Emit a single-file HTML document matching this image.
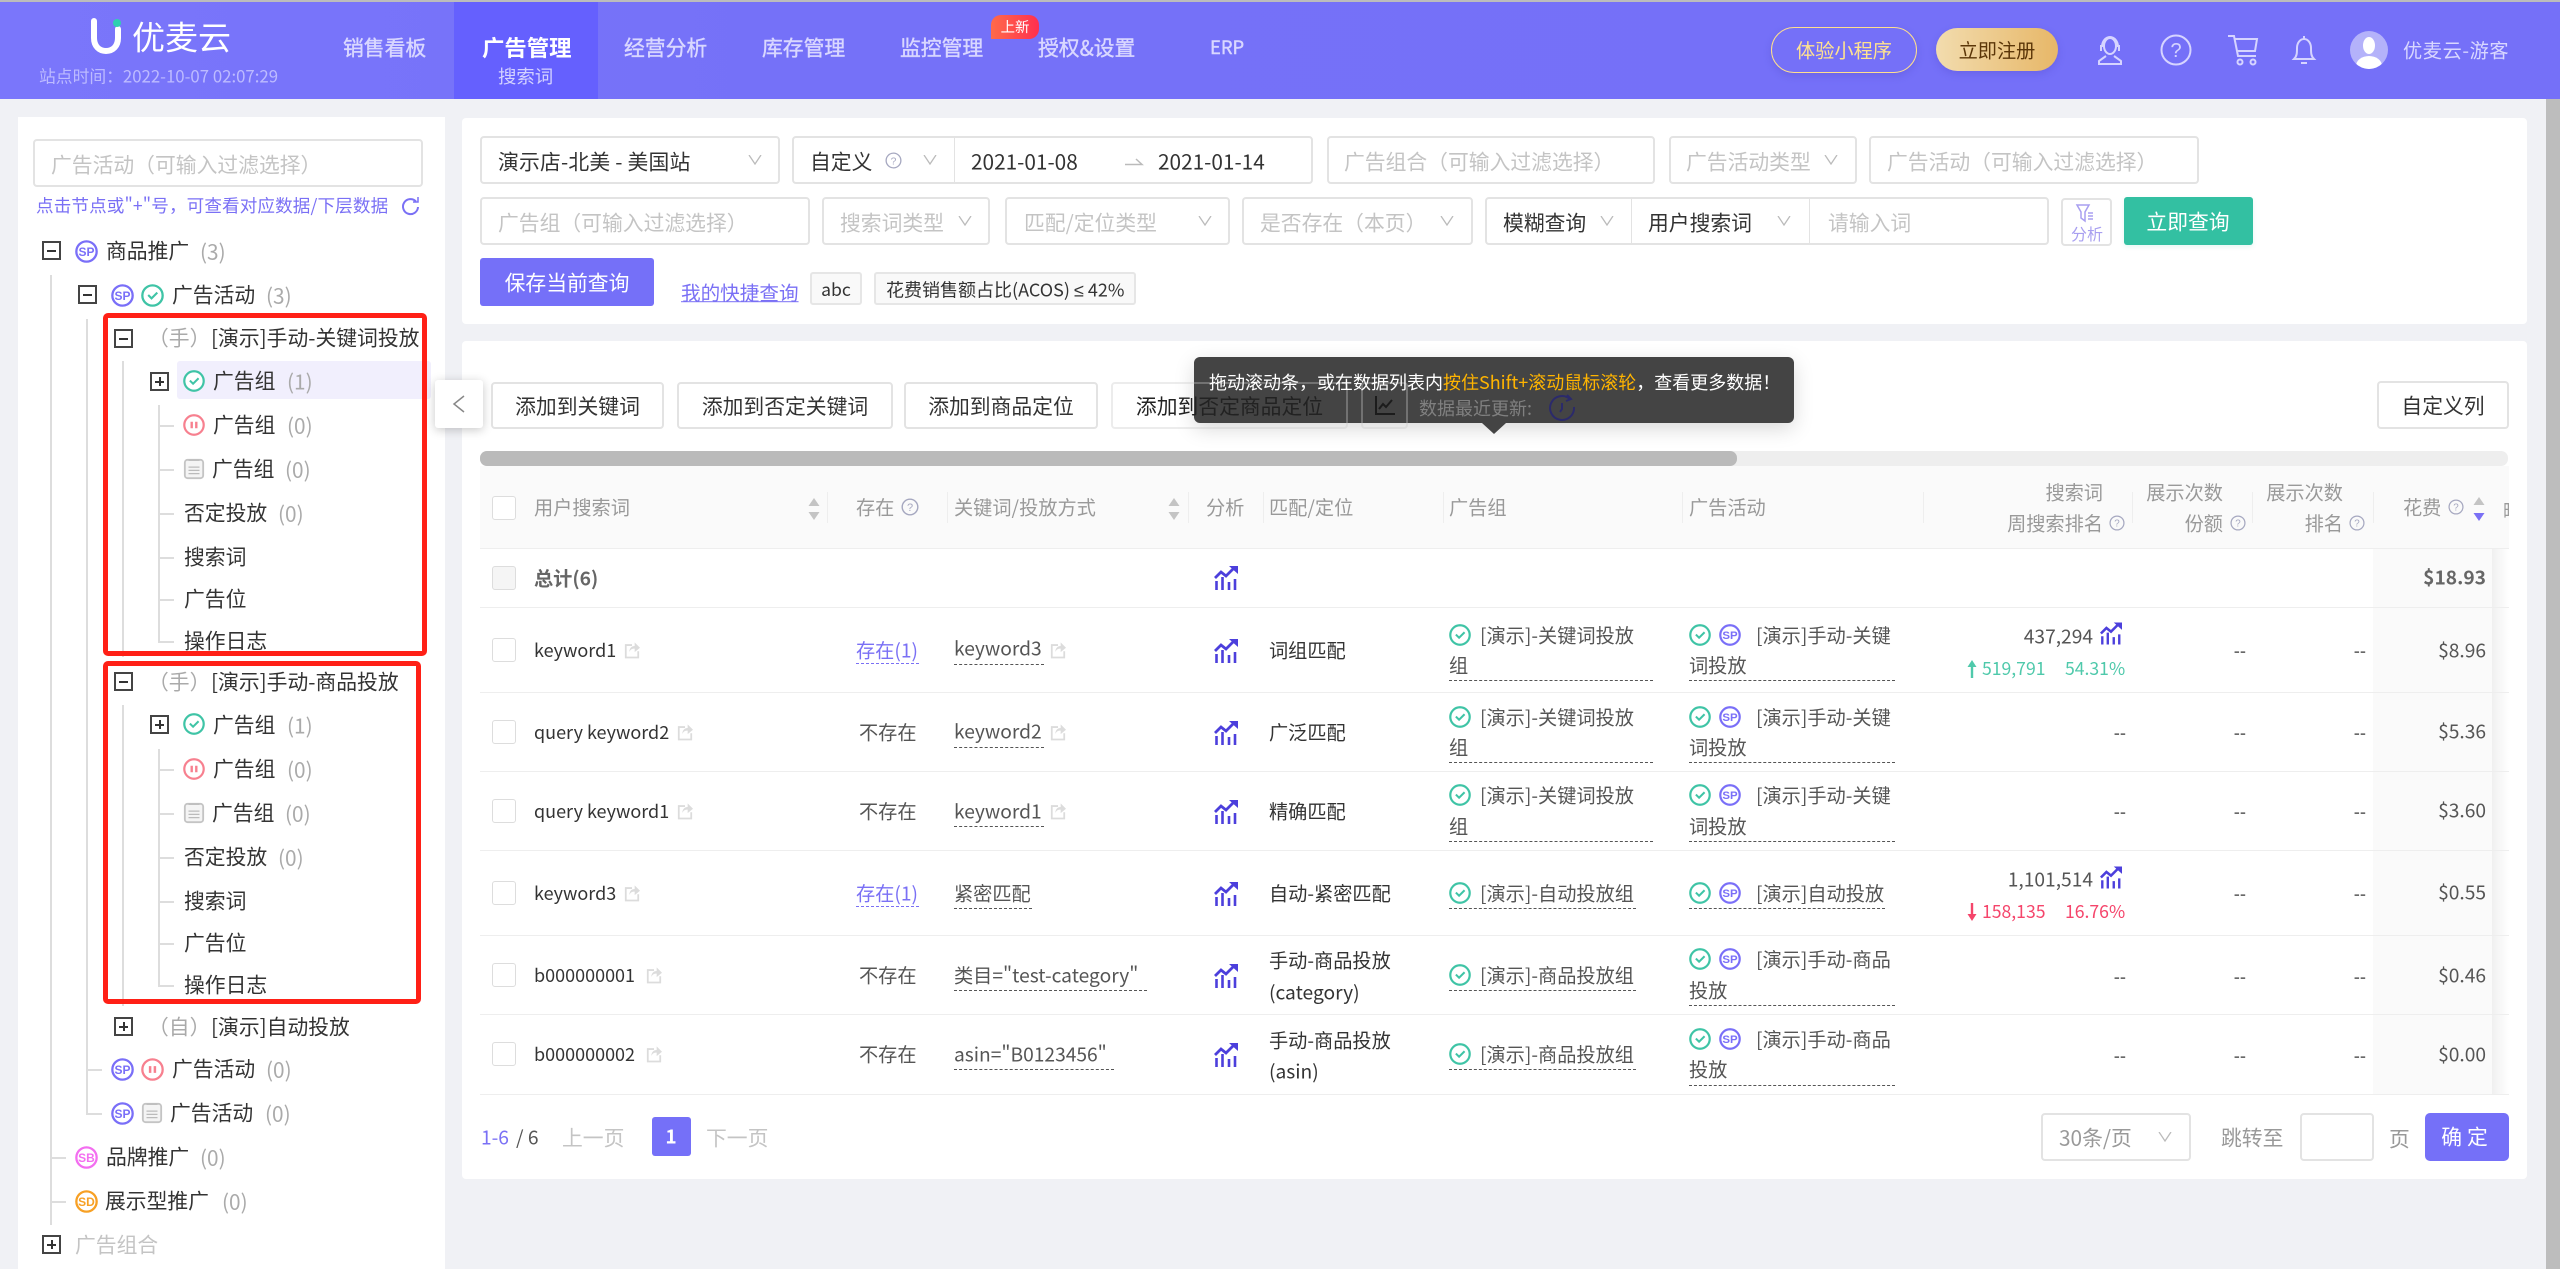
<!DOCTYPE html>
<html lang="zh-CN"><head><meta charset="utf-8"><title>优麦云</title>
<style>
html,body{margin:0;padding:0;width:2560px;height:1269px;overflow:hidden;background:#f0f1f5}
body{position:relative;font-family:"Noto Sans CJK SC","Liberation Sans",sans-serif;color:#333;font-size:19.2px}
.t{position:absolute;line-height:1;white-space:nowrap;transform:translateY(-50%)}
.r{transform:translate(-100%,-50%)}
.c{transform:translate(-50%,-50%)}
.a{position:absolute}
.b{position:absolute;box-sizing:border-box;background:#fff;border:2px solid #e3e3e3;border-radius:4px}
svg.i{position:absolute;overflow:visible}
.f{font-size:20.8px}
.s{font-size:17.6px}
.k{font-size:18px}
.g{color:#c4c4c4}
.n{color:#aaa}
.p{color:#7a70f5}
.h{color:#999}
.w{color:#555}
.nav{color:#d9d7ff;font-size:20.8px;-webkit-text-stroke:.4px #d9d7ff}
.l{position:absolute;background:#ddd;width:2px}
.m{position:absolute;background:#ddd;height:2px}
.d{position:absolute;border-bottom:1px dashed #555;height:0}
.dv{position:absolute;background:#eee;width:1px;top:492px;height:31px}
.rw{position:absolute;left:480px;width:2029px;height:1px;background:#eee}
.cb{position:absolute;left:492px;width:24px;height:24px;box-sizing:border-box;background:#fff;border:1px solid #ddd;border-radius:3px}
.bx{position:absolute;box-sizing:border-box;width:19px;height:19px;border:2px solid #444;background:#fff}
.bx:before{content:"";position:absolute;left:3px;top:6.5px;width:9px;height:2px;background:#333}
.pl:after{content:"";position:absolute;left:6.5px;top:3px;width:2px;height:9px;background:#333}
.red{position:absolute;box-sizing:border-box;border:5px solid #ff2016;border-radius:5px;left:103px}
.btn{position:absolute;box-sizing:border-box;background:transparent;border:2px solid #e3e3e3;border-radius:4px;top:382px;height:47px;font-size:20.8px;line-height:43px;text-align:center;color:#333;white-space:nowrap}
</style></head><body>
<svg width="0" height="0" style="position:absolute">
<symbol id="sp" viewBox="0 0 24 24"><circle cx="12" cy="12" r="10.6" fill="#fff" stroke="#7a6ff8" stroke-width="2.4"/><text x="12" y="16.500" font-size="12.500" font-weight="700" text-anchor="middle" fill="#7a6ff8" font-family="Liberation Sans,sans-serif">SP</text></symbol>
<symbol id="sb" viewBox="0 0 24 24"><circle cx="12" cy="12" r="10.6" fill="#fff" stroke="#f36ef0" stroke-width="2.4"/><text x="12" y="16.500" font-size="12.500" font-weight="700" text-anchor="middle" fill="#f36ef0" font-family="Liberation Sans,sans-serif">SB</text></symbol>
<symbol id="sd" viewBox="0 0 24 24"><circle cx="12" cy="12" r="10.6" fill="#fff" stroke="#f7a024" stroke-width="2.4"/><text x="12" y="16.500" font-size="12.500" font-weight="700" text-anchor="middle" fill="#f7a024" font-family="Liberation Sans,sans-serif">SD</text></symbol>
<symbol id="ok" viewBox="0 0 24 24"><circle cx="12" cy="12" r="10.6" fill="#fff" stroke="#3fc4a6" stroke-width="2.4"/><path d="M7.5 11.5l3.5 3.5 6-6" fill="none" stroke="#3fc4a6" stroke-width="2.2"/></symbol>
<symbol id="pa" viewBox="0 0 24 24"><circle cx="12" cy="12" r="10.6" fill="#fff" stroke="#f7808f" stroke-width="2.4"/><path d="M9.5 8.5v7M14.5 8.5v7" fill="none" stroke="#f7808f" stroke-width="2.6"/></symbol>
<symbol id="cl" viewBox="0 0 24 24"><rect x="2" y="2" width="20" height="20" rx="3" fill="#f4f4f4" stroke="#c4c4c4" stroke-width="2"/><path d="M6 2.5h12M6 10h12M6 13.500h12M6 17h12" fill="none" stroke="#bbb" stroke-width="1.400"/></symbol>
<symbol id="tr" viewBox="0 0 24 24"><path d="M1 12l6-6 5 4 7-7" fill="none" stroke="#4c3fdc" stroke-width="2.800"/><path d="M15 0h9v8z" fill="#4c3fdc"/><path d="M2.500 15v9M8.500 11v13M15 16v8M21 13v11" fill="none" stroke="#4c3fdc" stroke-width="2.600"/></symbol>
<symbol id="sh" viewBox="0 0 18 20"><path d="M9 5H2v14h14v-7" fill="none" stroke="#dcdcdc" stroke-width="2"/><path d="M6 13c0-5 3-7 6-7V2l6 6-6 5V9c-3 0-5 1-6 4z" fill="#dcdcdc"/></symbol>
<symbol id="he" viewBox="0 0 18 18"><circle cx="9" cy="9" r="7.800" fill="none" stroke="#a6a8c0" stroke-width="1.400"/><text x="9" y="13" font-size="11" text-anchor="middle" fill="#a6a8c0" font-family="Liberation Sans,sans-serif">?</text></symbol>
<symbol id="dn" viewBox="0 0 14 10"><path d="M1 0l6 9 6-9" fill="none" stroke="#bbb" stroke-width="1.300"/></symbol>
<symbol id="so" viewBox="0 0 12 22"><path d="M6 0l5.500 8H.5z" fill="#c4c4c4"/><path d="M6 22L.5 14h11z" fill="#c4c4c4"/></symbol>
</svg>

<div class="a" style="left:0;top:0;width:2560px;height:2px;background:#bcbcbc"></div>
<div class="a" style="left:0;top:2px;width:2560px;height:97px;background:linear-gradient(90deg,#7a76fb,#7571f8 30%,#7570f8)"></div>
<div class="a" style="left:454px;top:2px;width:144px;height:97px;background:#6560fe"></div>
<svg class="i" style="left:88px;top:17px" width="36" height="38"><path d="M6 4v17c0 8 5 13 12 13s12-5 12-13v-9" fill="none" stroke="#fff" stroke-width="6" stroke-linecap="round"/><circle cx="29" cy="6" r="4" fill="#2fd0b0"/></svg>
<span class="t" style="left:132px;top:36px;font-size:33px;color:#fff">优麦云</span>
<span class="t" style="left:39px;top:76px;font-size:16.8px;color:#bdbbff">站点时间：2022-10-07 02:07:29</span>
<span class="t nav" style="left:343px;top:47px">销售看板</span>
<span class="t" style="left:482px;top:47px;font-size:22.4px;font-weight:700;color:#fff">广告管理</span>
<span class="t" style="left:498px;top:76px;font-size:18.400px;color:#d4d2ff">搜索词</span>
<span class="t nav" style="left:624px;top:47px">经营分析</span>
<span class="t nav" style="left:762px;top:47px">库存管理</span>
<span class="t nav" style="left:900px;top:47px">监控管理</span>
<span class="t nav" style="left:1038px;top:47px">授权&amp;设置</span>
<span class="t" style="left:1210px;top:47px;font-size:18.400px;color:#d9d7ff;-webkit-text-stroke:.4px #d9d7ff">ERP</span>
<div class="a" style="left:991px;top:15px;width:48px;height:24px;background:linear-gradient(90deg,#ff6a4a,#ff2f4f);border-radius:10px 10px 10px 0"></div>
<span class="t c" style="left:1015px;top:27px;font-size:14.400px;color:#fff">上新</span>
<div class="a" style="left:1771px;top:27px;width:146px;height:46px;box-sizing:border-box;border:1.500px solid #ffdf8e;border-radius:23px;box-shadow:0 3px 8px rgba(80,70,200,.3)"></div>
<span class="t c" style="left:1844px;top:50px;font-size:19.200px;color:#ffe28f">体验小程序</span>
<div class="a" style="left:1936px;top:28px;width:122px;height:43px;border-radius:22px;background:linear-gradient(90deg,#f2dcae,#e7b768);box-shadow:0 3px 8px rgba(80,70,200,.3)"></div>
<span class="t c" style="left:1997px;top:50px;font-size:19.200px;color:#5b3608">立即注册</span>
<svg class="i" style="left:2096px;top:33px" width="28" height="32" fill="none" stroke="#d6d4ff" stroke-width="2"><path d="M6 14a8 10 0 0 1 16 0M5 12v6M23 12v6M8 13a6 8 0 0 0 12 0 6 8 0 0 0-12 0zM10 23l-7 5v3h22v-3l-7-5"/></svg>
<svg class="i" style="left:2160px;top:34px" width="32" height="32"><circle cx="16" cy="16" r="14.500" fill="none" stroke="#d6d4ff" stroke-width="2"/><text x="16" y="23" font-size="20" text-anchor="middle" fill="#d6d4ff" font-family="Liberation Sans,sans-serif">?</text></svg>
<svg class="i" style="left:2226px;top:34px" width="34" height="32" fill="none" stroke="#d6d4ff" stroke-width="2"><path d="M2 2h6l4 20h18M8 5h23l-2 12H11"/><circle cx="14" cy="28" r="2.500"/><circle cx="27" cy="28" r="2.500"/></svg>
<svg class="i" style="left:2290px;top:34px" width="28" height="32" fill="none" stroke="#d6d4ff" stroke-width="2"><path d="M14 2v3M4 25c3-3 3-6 3-11 0-5 3-9 7-9s7 4 7 9c0 5 0 8 3 11zM11 29h6"/></svg>
<div class="a" style="left:2350px;top:31px;width:38px;height:38px;border-radius:50%;background:#b4b2fa;overflow:hidden"><div class="a" style="left:13px;top:6px;width:12px;height:17px;border-radius:50%;background:#fff"></div><div class="a" style="left:6px;top:25px;width:26px;height:20px;border-radius:50%;background:#fff"></div></div>
<span class="t" style="left:2403px;top:50px;font-size:19.200px;color:#d9d7ff;letter-spacing:.6px">优麦云-游客</span>
<div class="a" style="left:2546px;top:99px;width:14px;height:1170px;background:#bdbdbd"></div>

<!-- LEFT -->
<div class="a" style="left:18px;top:117px;width:427px;height:1152px;background:#fff"></div>
<div class="b" style="left:33px;top:139px;width:390px;height:48px"></div>
<span class="t f g" style="left:51px;top:164px">广告活动（可输入过滤选择）</span>
<span class="t s p" style="left:36px;top:206px;letter-spacing:.1px">点击节点或"+"号，可查看对应数据/下层数据</span>
<svg class="i" style="left:402px;top:197px" width="17" height="18" fill="none" stroke="#7a70f5" stroke-width="2"><path d="M14 4.500A7.500 7.500 0 1 0 16 10"/><path d="M11 5h5V0" stroke-width="1.500"/></svg>

<div class="l" style="left:50px;top:275px;height:950px"></div>
<div class="l" style="left:86px;top:319px;height:794px"></div>
<div class="l" style="left:122px;top:361px;height:296px"></div>
<div class="l" style="left:122px;top:705px;height:301px"></div>
<div class="l" style="left:158px;top:405px;height:236px"></div>
<div class="l" style="left:158px;top:749px;height:236px"></div>
<div class="m" style="left:158px;top:425px;width:16px"></div><div class="m" style="left:158px;top:469px;width:16px"></div><div class="m" style="left:158px;top:513px;width:16px"></div><div class="m" style="left:158px;top:557px;width:16px"></div><div class="m" style="left:158px;top:599px;width:16px"></div><div class="m" style="left:158px;top:641px;width:16px"></div>
<div class="m" style="left:158px;top:769px;width:16px"></div><div class="m" style="left:158px;top:813px;width:16px"></div><div class="m" style="left:158px;top:857px;width:16px"></div><div class="m" style="left:158px;top:901px;width:16px"></div><div class="m" style="left:158px;top:943px;width:16px"></div><div class="m" style="left:158px;top:985px;width:16px"></div>
<div class="m" style="left:86px;top:1069px;width:16px"></div><div class="m" style="left:86px;top:1113px;width:16px"></div>
<div class="m" style="left:50px;top:1157px;width:16px"></div><div class="m" style="left:50px;top:1201px;width:16px"></div>

<div class="bx" style="left:42px;top:241px"></div>
<svg class="i" style="left:75px;top:240px" width="23" height="23"><use href="#sp"/></svg>
<span class="t f" style="left:106px;top:250px">商品推广</span><span class="t f n" style="left:200px;top:251px">(3)</span>

<div class="bx" style="left:78px;top:285px"></div>
<svg class="i" style="left:111px;top:284px" width="23" height="23"><use href="#sp"/></svg>
<svg class="i" style="left:141px;top:284px" width="23" height="23"><use href="#ok"/></svg>
<span class="t f" style="left:172px;top:294px">广告活动</span><span class="t f n" style="left:266px;top:295px">(3)</span>

<div class="bx" style="left:114px;top:329px"></div>
<span class="t f n" style="left:148px;top:337px">（手）</span>
<span class="t f" style="left:211px;top:337px">[演示]手动-关键词投放</span>

<div class="a" style="left:177px;top:361px;width:254px;height:38px;background:#f1effd;border-radius:3px"></div>
<div class="bx pl" style="left:150px;top:372px"></div>
<svg class="i" style="left:183px;top:370px" width="22" height="22"><use href="#ok"/></svg>
<span class="t f" style="left:213px;top:380px">广告组</span><span class="t f n" style="left:287px;top:381px">(1)</span>
<svg class="i" style="left:183px;top:414px" width="22" height="22"><use href="#pa"/></svg>
<span class="t f" style="left:213px;top:424px">广告组</span><span class="t f n" style="left:287px;top:425px">(0)</span>
<svg class="i" style="left:183px;top:458px" width="22" height="22"><use href="#cl"/></svg>
<span class="t f" style="left:212px;top:468px">广告组</span><span class="t f n" style="left:285px;top:469px">(0)</span>
<span class="t f" style="left:184px;top:512px">否定投放</span><span class="t f n" style="left:278px;top:513px">(0)</span>
<span class="t f" style="left:184px;top:556px">搜索词</span>
<span class="t f" style="left:184px;top:598px">广告位</span>
<span class="t f" style="left:184px;top:640px">操作日志</span>

<div class="bx" style="left:114px;top:672px"></div>
<span class="t f n" style="left:148px;top:681px">（手）</span>
<span class="t f" style="left:211px;top:681px">[演示]手动-商品投放</span>
<div class="bx pl" style="left:150px;top:715px"></div>
<svg class="i" style="left:183px;top:713px" width="22" height="22"><use href="#ok"/></svg>
<span class="t f" style="left:213px;top:724px">广告组</span><span class="t f n" style="left:287px;top:725px">(1)</span>
<svg class="i" style="left:183px;top:758px" width="22" height="22"><use href="#pa"/></svg>
<span class="t f" style="left:213px;top:768px">广告组</span><span class="t f n" style="left:287px;top:769px">(0)</span>
<svg class="i" style="left:183px;top:802px" width="22" height="22"><use href="#cl"/></svg>
<span class="t f" style="left:212px;top:812px">广告组</span><span class="t f n" style="left:285px;top:813px">(0)</span>
<span class="t f" style="left:184px;top:856px">否定投放</span><span class="t f n" style="left:278px;top:857px">(0)</span>
<span class="t f" style="left:184px;top:900px">搜索词</span>
<span class="t f" style="left:184px;top:942px">广告位</span>
<span class="t f" style="left:184px;top:984px">操作日志</span>

<div class="bx pl" style="left:114px;top:1017px"></div>
<span class="t f n" style="left:148px;top:1026px">（自）</span>
<span class="t f" style="left:211px;top:1026px">[演示]自动投放</span>
<svg class="i" style="left:111px;top:1058px" width="23" height="23"><use href="#sp"/></svg>
<svg class="i" style="left:141px;top:1058px" width="23" height="23"><use href="#pa"/></svg>
<span class="t f" style="left:172px;top:1068px">广告活动</span><span class="t f n" style="left:266px;top:1069px">(0)</span>
<svg class="i" style="left:111px;top:1102px" width="23" height="23"><use href="#sp"/></svg>
<svg class="i" style="left:141px;top:1102px" width="22" height="22"><use href="#cl"/></svg>
<span class="t f" style="left:170px;top:1112px">广告活动</span><span class="t f n" style="left:265px;top:1113px">(0)</span>
<svg class="i" style="left:75px;top:1146px" width="23" height="23"><use href="#sb"/></svg>
<span class="t f" style="left:106px;top:1156px">品牌推广</span><span class="t f n" style="left:200px;top:1157px">(0)</span>
<svg class="i" style="left:75px;top:1190px" width="23" height="23"><use href="#sd"/></svg>
<span class="t f" style="left:105px;top:1200px">展示型推广</span><span class="t f n" style="left:222px;top:1201px">(0)</span>
<div class="bx pl" style="left:42px;top:1235px"></div>
<span class="t f g" style="left:75px;top:1244px">广告组合</span>

<div class="red" style="top:313px;width:324px;height:343px"></div>
<div class="red" style="top:661px;width:318px;height:343px"></div>

<!-- TOP PANEL -->
<div class="a" style="left:462px;top:118px;width:2065px;height:206px;background:#fff;border-radius:4px"></div>
<div class="b" style="left:480px;top:136px;width:300px;height:48px"></div>
<span class="t f" style="left:498px;top:161px;letter-spacing:.2px">演示店-北美 - 美国站</span>
<svg class="i" style="left:748px;top:155px" width="14" height="10"><use href="#dn"/></svg>
<div class="b" style="left:792px;top:136px;width:521px;height:48px"></div>
<span class="t f" style="left:810px;top:161px">自定义</span>
<svg class="i" style="left:885px;top:152px" width="17" height="17"><use href="#he"/></svg>
<svg class="i" style="left:923px;top:155px" width="14" height="10"><use href="#dn"/></svg>
<div class="a" style="left:954px;top:137px;width:1px;height:46px;background:#e3e3e3"></div>
<span class="t f" style="left:971px;top:161px">2021-01-08</span>
<svg class="i" style="left:1125px;top:158px" width="18" height="8" fill="none" stroke="#bbb" stroke-width="1.500"><path d="M0 6.500h17L11 1"/></svg>
<span class="t f" style="left:1158px;top:161px">2021-01-14</span>
<div class="b" style="left:1327px;top:136px;width:328px;height:48px"></div>
<span class="t f g" style="left:1344px;top:161px">广告组合（可输入过滤选择）</span>
<div class="b" style="left:1669px;top:136px;width:188px;height:48px"></div>
<span class="t f g" style="left:1686px;top:161px">广告活动类型</span>
<svg class="i" style="left:1824px;top:155px" width="14" height="10"><use href="#dn"/></svg>
<div class="b" style="left:1869px;top:136px;width:330px;height:48px"></div>
<span class="t f g" style="left:1887px;top:161px">广告活动（可输入过滤选择）</span>

<div class="b" style="left:480px;top:197px;width:330px;height:48px"></div>
<span class="t f g" style="left:498px;top:222px">广告组（可输入过滤选择）</span>
<div class="b" style="left:822px;top:197px;width:168px;height:48px"></div>
<span class="t f g" style="left:840px;top:222px">搜索词类型</span>
<svg class="i" style="left:958px;top:216px" width="14" height="10"><use href="#dn"/></svg>
<div class="b" style="left:1005px;top:197px;width:225px;height:48px"></div>
<span class="t f g" style="left:1024px;top:222px">匹配/定位类型</span>
<svg class="i" style="left:1198px;top:216px" width="14" height="10"><use href="#dn"/></svg>
<div class="b" style="left:1242px;top:197px;width:231px;height:48px"></div>
<span class="t f g" style="left:1260px;top:222px">是否存在（本页）</span>
<svg class="i" style="left:1440px;top:216px" width="14" height="10"><use href="#dn"/></svg>
<div class="b" style="left:1485px;top:197px;width:564px;height:48px"></div>
<span class="t f" style="left:1503px;top:222px">模糊查询</span>
<svg class="i" style="left:1600px;top:216px" width="14" height="10"><use href="#dn"/></svg>
<div class="a" style="left:1631px;top:198px;width:1px;height:46px;background:#e3e3e3"></div>
<span class="t f" style="left:1648px;top:222px">用户搜索词</span>
<svg class="i" style="left:1777px;top:216px" width="14" height="10"><use href="#dn"/></svg>
<div class="a" style="left:1809px;top:198px;width:1px;height:46px;background:#e3e3e3"></div>
<span class="t f g" style="left:1828px;top:222px">请输入词</span>
<div class="b" style="left:2061px;top:198px;width:51px;height:48px"></div>
<svg class="i" style="left:2076px;top:204px" width="22" height="18" fill="none" stroke="#a89ff0" stroke-width="1.500"><path d="M1 1h12L9 8v9L5 14V8z"/><path d="M12 9h5M12 12h5M12 15h5"/></svg>
<span class="t c" style="left:2087px;top:233px;font-size:16px;color:#a89ff0">分析</span>
<div class="a" style="left:2124px;top:197px;width:129px;height:48px;background:#33c0a2;border-radius:3px;box-shadow:0 2px 5px rgba(51,192,162,.12)"></div>
<span class="t c f" style="left:2188px;top:221px;color:#fff">立即查询</span>

<div class="a" style="left:480px;top:258px;width:174px;height:48px;background:#7570f8;border-radius:3px"></div>
<span class="t c f" style="left:567px;top:282px;color:#fff">保存当前查询</span>
<span class="t p" style="left:681px;top:292px;text-decoration:underline;font-size:19.600px">我的快捷查询</span>
<div class="a" style="left:810px;top:272px;width:52px;height:33px;box-sizing:border-box;background:#f9f9f9;border:2px solid #e6e6e6;border-radius:3px"></div>
<span class="t c s" style="left:836px;top:290px">abc</span>
<div class="a" style="left:874px;top:272px;width:262px;height:33px;box-sizing:border-box;background:#f9f9f9;border:2px solid #e6e6e6;border-radius:3px"></div>
<span class="t k" style="left:886px;top:290px">花费销售额占比(ACOS) <span style="font-family:'Liberation Sans',sans-serif">≤</span> 42%</span>

<!-- MAIN PANEL -->
<div class="a" style="left:462px;top:341px;width:2065px;height:838px;background:#fff;border-radius:4px"></div>
<!-- tooltip body sits under the toolbar, as in the reference -->
<div class="a" style="left:1194px;top:357px;width:600px;height:66px;background:#444;border-radius:6px;box-shadow:0 6px 20px rgba(0,0,0,.15)"></div>
<svg class="i" style="left:1482px;top:423px" width="24" height="11"><path d="M0 0h24L12 11z" fill="#444"/></svg>

<div class="btn" style="left:491px;width:173px">添加到关键词</div>
<div class="btn" style="left:677px;width:216px">添加到否定关键词</div>
<div class="btn" style="left:904px;width:194px">添加到商品定位</div>
<div class="btn" style="left:1111px;width:237px;color:#222;border-color:rgba(200,200,200,.35)">添加到否定商品定位</div>
<div class="btn" style="left:1361px;width:47px;border-color:rgba(200,200,200,.35)"></div>
<svg class="i" style="left:1375px;top:396px" width="20" height="20" fill="none" stroke="#1c1c1c" stroke-width="2"><path d="M1 0v18h19M4 13l4-5 3 3 6-7"/></svg>
<span class="t h" style="left:1419px;top:408px;font-size:18px;color:#808080">数据最近更新:</span>
<svg class="i" style="left:1549px;top:394px" width="27" height="28" fill="none" stroke="#2b2a6b" stroke-width="2"><path d="M21 5A12 12 0 1 0 25 13M18 1l4 4-5 2M13 9v6l-2 3"/></svg>
<div class="b" style="left:2377px;top:381px;width:132px;height:48px"></div>
<span class="t c f" style="left:2443px;top:405px">自定义列</span>

<div class="a" style="left:480px;top:451px;width:2028px;height:15px;background:#eee;border-radius:7px"></div>
<div class="a" style="left:480px;top:451px;width:1257px;height:15px;background:#bababa;border-radius:7px"></div>

<div class="a" style="left:480px;top:466px;width:2029px;height:82px;background:#fafafa;overflow:hidden"></div>
<div class="a" style="left:2373px;top:548px;width:119px;height:546px;background:#fafafa"></div>
<div class="a" style="left:2492px;top:548px;width:17px;height:546px;background:linear-gradient(90deg,#f0f0f0,#fff)"></div>
<div class="dv" style="left:827px"></div><div class="dv" style="left:947px"></div><div class="dv" style="left:1188px"></div><div class="dv" style="left:1263px"></div><div class="dv" style="left:1443px"></div><div class="dv" style="left:1682px"></div><div class="dv" style="left:1923px"></div><div class="dv" style="left:2132px"></div><div class="dv" style="left:2252px"></div><div class="dv" style="left:2373px"></div>
<div class="rw" style="top:548px"></div><div class="rw" style="top:607px"></div><div class="rw" style="top:692px"></div><div class="rw" style="top:771px"></div><div class="rw" style="top:850px"></div><div class="rw" style="top:935px"></div><div class="rw" style="top:1014px"></div><div class="rw" style="top:1094px"></div>

<div class="cb" style="top:496px"></div>
<span class="t h" style="left:534px;top:507px">用户搜索词</span>
<svg class="i" style="left:808px;top:498px" width="12" height="22"><use href="#so"/></svg>
<span class="t h" style="left:856px;top:507px">存在</span>
<svg class="i" style="left:901px;top:498px" width="18" height="18"><use href="#he"/></svg>
<span class="t h" style="left:954px;top:507px">关键词/投放方式</span>
<svg class="i" style="left:1168px;top:498px" width="12" height="22"><use href="#so"/></svg>
<span class="t h" style="left:1206px;top:507px">分析</span>
<span class="t h" style="left:1269px;top:507px">匹配/定位</span>
<span class="t h" style="left:1449px;top:507px">广告组</span>
<span class="t h" style="left:1689px;top:507px">广告活动</span>
<span class="t h r" style="left:2103px;top:492px">搜索词</span>
<span class="t h r" style="left:2103px;top:523px">周搜索排名</span>
<svg class="i" style="left:2109px;top:515px" width="16" height="16"><use href="#he"/></svg>
<span class="t h r" style="left:2223px;top:492px">展示次数</span>
<span class="t h r" style="left:2223px;top:523px">份额</span>
<svg class="i" style="left:2230px;top:515px" width="16" height="16"><use href="#he"/></svg>
<span class="t h r" style="left:2343px;top:492px">展示次数</span>
<span class="t h r" style="left:2343px;top:523px">排名</span>
<svg class="i" style="left:2349px;top:515px" width="16" height="16"><use href="#he"/></svg>
<span class="t h" style="left:2403px;top:507px">花费</span>
<svg class="i" style="left:2448px;top:499px" width="16" height="16"><use href="#he"/></svg>
<svg class="i" style="left:2473px;top:497px" width="12" height="24"><path d="M6 0l5.500 8H.5z" fill="#c4c4c4"/><path d="M6 24L.5 16h11z" fill="#7a70f5"/></svg>
<div class="a" style="left:2503px;top:496px;width:6px;height:22px;overflow:hidden"><span class="h" style="line-height:22px">曝光</span></div>

<!-- total -->
<div class="cb" style="top:566px;background:#f5f5f5"></div>
<span class="t" style="left:534px;top:578px;font-weight:700;color:#666;font-size:19.200px">总计(6)</span>
<svg class="i" style="left:1214px;top:566px" width="24" height="24"><use href="#tr"/></svg>
<span class="t r" style="left:2486px;top:577px;font-weight:700;color:#666;font-size:19.200px">$18.93</span>

<!-- row 1 -->
<div class="cb" style="top:638px"></div>
<span class="t k" style="left:534px;top:650px">keyword1</span>
<svg class="i" style="left:624px;top:640px" width="16" height="19"><use href="#sh"/></svg>
<span class="t p" style="left:856px;top:650px">存在(1)</span><div class="d" style="left:856px;top:663px;width:63px;border-color:#7a70f5"></div>
<span class="t w" style="left:954px;top:648px">keyword3</span>
<svg class="i" style="left:1050px;top:640px" width="16" height="19"><use href="#sh"/></svg><div class="d" style="left:954px;top:664px;width:90px"></div>
<svg class="i" style="left:1214px;top:639px" width="24" height="24"><use href="#tr"/></svg>
<span class="t" style="left:1269px;top:650px">词组匹配</span>
<svg class="i" style="left:1449px;top:624px" width="22" height="22"><use href="#ok"/></svg>
<span class="t w" style="left:1480px;top:635px">[演示]-关键词投放</span>
<span class="t w" style="left:1449px;top:665px">组</span><div class="d" style="left:1449px;top:680px;width:204px"></div>
<svg class="i" style="left:1689px;top:624px" width="22" height="22"><use href="#ok"/></svg>
<svg class="i" style="left:1719px;top:624px" width="22" height="22"><use href="#sp"/></svg>
<span class="t w" style="left:1756px;top:635px">[演示]手动-关键</span>
<span class="t w" style="left:1689px;top:665px">词投放</span><div class="d" style="left:1689px;top:680px;width:206px"></div>
<span class="t w r" style="left:2093px;top:636px">437,294</span>
<svg class="i" style="left:2100px;top:622px" width="22" height="23"><use href="#tr"/></svg>
<svg class="i" style="left:1967px;top:660px" width="10" height="18"><path d="M5 0l4.500 7H6.200v11H3.800V7H.5z" fill="#4fc9ab"/></svg>
<span class="t s" style="left:1982px;top:669px;color:#4fc9ab">519,791</span>
<span class="t s" style="left:2065px;top:669px;color:#4fc9ab">54.31%</span>
<span class="t s r" style="left:2246px;top:651px">--</span><span class="t s r" style="left:2366px;top:651px">--</span>
<span class="t w r" style="left:2486px;top:650px">$8.96</span>

<!-- row 2 -->
<div class="cb" style="top:720px"></div>
<span class="t k" style="left:534px;top:732px">query keyword2</span>
<svg class="i" style="left:677px;top:722px" width="16" height="19"><use href="#sh"/></svg>
<span class="t w" style="left:859px;top:732px">不存在</span>
<span class="t w" style="left:954px;top:731px">keyword2</span>
<svg class="i" style="left:1050px;top:722px" width="16" height="19"><use href="#sh"/></svg><div class="d" style="left:954px;top:747px;width:90px"></div>
<svg class="i" style="left:1214px;top:721px" width="24" height="24"><use href="#tr"/></svg>
<span class="t" style="left:1269px;top:732px">广泛匹配</span>
<svg class="i" style="left:1449px;top:706px" width="22" height="22"><use href="#ok"/></svg>
<span class="t w" style="left:1480px;top:717px">[演示]-关键词投放</span>
<span class="t w" style="left:1449px;top:747px">组</span><div class="d" style="left:1449px;top:762px;width:204px"></div>
<svg class="i" style="left:1689px;top:706px" width="22" height="22"><use href="#ok"/></svg>
<svg class="i" style="left:1719px;top:706px" width="22" height="22"><use href="#sp"/></svg>
<span class="t w" style="left:1756px;top:717px">[演示]手动-关键</span>
<span class="t w" style="left:1689px;top:747px">词投放</span><div class="d" style="left:1689px;top:762px;width:206px"></div>
<span class="t s r" style="left:2126px;top:733px">--</span><span class="t s r" style="left:2246px;top:733px">--</span><span class="t s r" style="left:2366px;top:733px">--</span>
<span class="t w r" style="left:2486px;top:731px">$5.36</span>

<!-- row 3 -->
<div class="cb" style="top:799px"></div>
<span class="t k" style="left:534px;top:811px">query keyword1</span>
<svg class="i" style="left:677px;top:801px" width="16" height="19"><use href="#sh"/></svg>
<span class="t w" style="left:859px;top:811px">不存在</span>
<span class="t w" style="left:954px;top:811px">keyword1</span>
<svg class="i" style="left:1050px;top:801px" width="16" height="19"><use href="#sh"/></svg><div class="d" style="left:954px;top:826px;width:90px"></div>
<svg class="i" style="left:1214px;top:800px" width="24" height="24"><use href="#tr"/></svg>
<span class="t" style="left:1269px;top:811px">精确匹配</span>
<svg class="i" style="left:1449px;top:784px" width="22" height="22"><use href="#ok"/></svg>
<span class="t w" style="left:1480px;top:795px">[演示]-关键词投放</span>
<span class="t w" style="left:1449px;top:826px">组</span><div class="d" style="left:1449px;top:841px;width:204px"></div>
<svg class="i" style="left:1689px;top:784px" width="22" height="22"><use href="#ok"/></svg>
<svg class="i" style="left:1719px;top:784px" width="22" height="22"><use href="#sp"/></svg>
<span class="t w" style="left:1756px;top:795px">[演示]手动-关键</span>
<span class="t w" style="left:1689px;top:826px">词投放</span><div class="d" style="left:1689px;top:841px;width:206px"></div>
<span class="t s r" style="left:2126px;top:812px">--</span><span class="t s r" style="left:2246px;top:812px">--</span><span class="t s r" style="left:2366px;top:812px">--</span>
<span class="t w r" style="left:2486px;top:810px">$3.60</span>

<!-- row 4 -->
<div class="cb" style="top:881px"></div>
<span class="t k" style="left:534px;top:893px">keyword3</span>
<svg class="i" style="left:624px;top:883px" width="16" height="19"><use href="#sh"/></svg>
<span class="t p" style="left:856px;top:893px">存在(1)</span><div class="d" style="left:856px;top:906px;width:63px;border-color:#7a70f5"></div>
<span class="t w" style="left:954px;top:893px">紧密匹配</span><div class="d" style="left:954px;top:908px;width:78px"></div>
<svg class="i" style="left:1214px;top:882px" width="24" height="24"><use href="#tr"/></svg>
<span class="t" style="left:1269px;top:893px">自动-紧密匹配</span>
<svg class="i" style="left:1449px;top:882px" width="22" height="22"><use href="#ok"/></svg>
<span class="t w" style="left:1480px;top:893px">[演示]-自动投放组</span><div class="d" style="left:1449px;top:908px;width:187px"></div>
<svg class="i" style="left:1689px;top:882px" width="22" height="22"><use href="#ok"/></svg>
<svg class="i" style="left:1719px;top:882px" width="22" height="22"><use href="#sp"/></svg>
<span class="t w" style="left:1756px;top:893px">[演示]自动投放</span><div class="d" style="left:1689px;top:908px;width:196px"></div>
<span class="t w r" style="left:2093px;top:879px">1,101,514</span>
<svg class="i" style="left:2100px;top:866px" width="22" height="23"><use href="#tr"/></svg>
<svg class="i" style="left:1967px;top:903px" width="10" height="18"><path d="M5 18l4.500-7H6.200V0H3.800v11H.5z" fill="#f5456b"/></svg>
<span class="t s" style="left:1982px;top:912px;color:#f5456b">158,135</span>
<span class="t s" style="left:2065px;top:912px;color:#f5456b">16.76%</span>
<span class="t s r" style="left:2246px;top:894px">--</span><span class="t s r" style="left:2366px;top:894px">--</span>
<span class="t w r" style="left:2486px;top:892px">$0.55</span>

<!-- row 5 -->
<div class="cb" style="top:963px"></div>
<span class="t k" style="left:534px;top:975px">b000000001</span>
<svg class="i" style="left:646px;top:965px" width="16" height="19"><use href="#sh"/></svg>
<span class="t w" style="left:859px;top:975px">不存在</span>
<span class="t w" style="left:954px;top:975px">类目="test-category"</span><div class="d" style="left:954px;top:990px;width:193px"></div>
<svg class="i" style="left:1214px;top:964px" width="24" height="24"><use href="#tr"/></svg>
<span class="t" style="left:1269px;top:960px">手动-商品投放</span>
<span class="t" style="left:1269px;top:992px">(category)</span>
<svg class="i" style="left:1449px;top:964px" width="22" height="22"><use href="#ok"/></svg>
<span class="t w" style="left:1480px;top:975px">[演示]-商品投放组</span><div class="d" style="left:1449px;top:990px;width:187px"></div>
<svg class="i" style="left:1689px;top:948px" width="22" height="22"><use href="#ok"/></svg>
<svg class="i" style="left:1719px;top:948px" width="22" height="22"><use href="#sp"/></svg>
<span class="t w" style="left:1756px;top:959px">[演示]手动-商品</span>
<span class="t w" style="left:1689px;top:990px">投放</span><div class="d" style="left:1689px;top:1005px;width:206px"></div>
<span class="t s r" style="left:2126px;top:977px">--</span><span class="t s r" style="left:2246px;top:977px">--</span><span class="t s r" style="left:2366px;top:977px">--</span>
<span class="t w r" style="left:2486px;top:975px">$0.46</span>

<!-- row 6 -->
<div class="cb" style="top:1042px"></div>
<span class="t k" style="left:534px;top:1054px">b000000002</span>
<svg class="i" style="left:646px;top:1044px" width="16" height="19"><use href="#sh"/></svg>
<span class="t w" style="left:859px;top:1054px">不存在</span>
<span class="t w" style="left:954px;top:1054px">asin="B0123456"</span><div class="d" style="left:954px;top:1069px;width:160px"></div>
<svg class="i" style="left:1214px;top:1043px" width="24" height="24"><use href="#tr"/></svg>
<span class="t" style="left:1269px;top:1040px">手动-商品投放</span>
<span class="t" style="left:1269px;top:1071px">(asin)</span>
<svg class="i" style="left:1449px;top:1043px" width="22" height="22"><use href="#ok"/></svg>
<span class="t w" style="left:1480px;top:1054px">[演示]-商品投放组</span><div class="d" style="left:1449px;top:1069px;width:187px"></div>
<svg class="i" style="left:1689px;top:1028px" width="22" height="22"><use href="#ok"/></svg>
<svg class="i" style="left:1719px;top:1028px" width="22" height="22"><use href="#sp"/></svg>
<span class="t w" style="left:1756px;top:1039px">[演示]手动-商品</span>
<span class="t w" style="left:1689px;top:1069px">投放</span><div class="d" style="left:1689px;top:1085px;width:206px"></div>
<span class="t s r" style="left:2126px;top:1056px">--</span><span class="t s r" style="left:2246px;top:1056px">--</span><span class="t s r" style="left:2366px;top:1056px">--</span>
<span class="t w r" style="left:2486px;top:1054px">$0.00</span>

<!-- pagination -->
<span class="t p" style="left:481px;top:1137px">1-6</span><span class="t w" style="left:516px;top:1137px">/ 6</span>
<span class="t g" style="left:562px;top:1137px;font-size:20.800px">上一页</span>
<div class="a" style="left:652px;top:1117px;width:39px;height:39px;background:#7570f8;border-radius:3px"></div>
<span class="t c" style="left:671px;top:1136px;color:#fff;font-weight:700">1</span>
<span class="t g" style="left:706px;top:1137px;font-size:20.800px">下一页</span>
<div class="b" style="left:2041px;top:1113px;width:150px;height:48px"></div>
<span class="t h" style="left:2059px;top:1137px;font-size:20.800px">30条/页</span>
<svg class="i" style="left:2158px;top:1132px" width="14" height="10"><use href="#dn"/></svg>
<span class="t h" style="left:2221px;top:1137px;font-size:20.800px">跳转至</span>
<div class="b" style="left:2300px;top:1113px;width:74px;height:48px"></div>
<span class="t h" style="left:2389px;top:1138px;font-size:20.800px">页</span>
<div class="a" style="left:2425px;top:1113px;width:84px;height:48px;background:#7570f8;border-radius:5px"></div>
<span class="t c f" style="left:2467px;top:1136px;color:#fff;letter-spacing:5px">确定</span>

<!-- collapse -->
<div class="a" style="left:435px;top:380px;width:48px;height:48px;background:#fff;border-radius:3px;box-shadow:0 2px 10px rgba(0,0,0,.22)"></div>
<svg class="i" style="left:453px;top:396px" width="12" height="16" fill="none" stroke="#888" stroke-width="1.500"><path d="M11 0L1 8l10 8"/></svg>

<span class="t k" style="left:1209px;top:382px;color:#fff">拖动滚动条，或在数据列表内<span style="color:#ffb400">按住Shift+滚动鼠标滚轮</span>，查看更多数据！</span>
</body></html>
